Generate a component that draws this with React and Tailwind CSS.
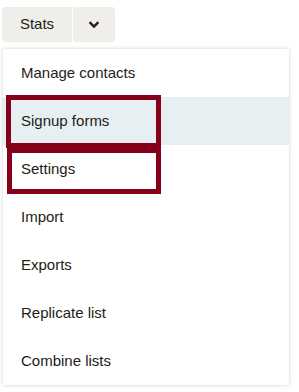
import { useState } from "react";

const items = [
  "Manage contacts",
  "Signup forms",
  "Settings",
  "Import",
  "Exports",
  "Replicate list",
  "Combine lists",
];

export default function App() {
  const [hovered] = useState("Signup forms");

  return (
    <div className="relative h-[392px] w-[299px] overflow-hidden bg-white font-['Liberation_Sans',Arial,sans-serif] text-[#241c15]">
      <div className="pl-[2px] pt-[7px]">
        <div className="flex h-[35px]">
          <button className="flex w-[70px] items-center justify-center rounded-l-[3px] bg-[#efeeea] text-[15px]">
            Stats
          </button>
          <div className="w-px bg-white" />
          <button className="flex w-[42px] items-center justify-center rounded-r-[3px] bg-[#efeeea]">
            <svg width="10" height="8" viewBox="0 0 10 8" fill="none">
              <path d="M1.5 2 L5 5.5 L8.5 2" stroke="#241c15" strokeWidth="2.4" strokeLinecap="square" />
            </svg>
          </button>
        </div>

        <div className="ml-px mt-[7px] w-[286px] rounded-[2px] bg-white shadow-[0_0_4px_rgba(0,0,0,0.18)]">
          {items.map((label) => (
            <div
              key={label}
              className={`flex h-[48px] items-center pl-[18px] pt-px text-[15px] ${hovered === label ? "bg-[#e6f0f2]" : ""}`}
            >
              {label}
            </div>
          ))}
        </div>
      </div>

      {/* annotation boxes drawn over the menu */}
      <div className="absolute left-[6px] top-[95px] h-[53px] w-[155px] border-[5px] border-[#86001a]" />
      <div className="absolute left-[7px] top-[148px] h-[46px] w-[154px] border-[5px] border-[#86001a]" />
    </div>
  );
}
